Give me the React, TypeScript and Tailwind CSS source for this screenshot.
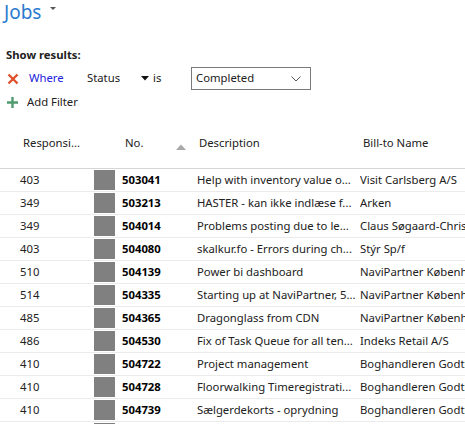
import React from "react";

const rows = [
  ["403", "503041", "Help with inventory value o...", "Visit Carlsberg A/S"],
  ["349", "503213", "HASTER - kan ikke indlæse f...", "Arken"],
  ["349", "504014", "Problems posting due to le...", "Claus Søgaard-Christensen"],
  ["403", "504080", "skalkur.fo - Errors during ch...", "Stýr Sp/f"],
  ["510", "504139", "Power bi dashboard", "NaviPartner København"],
  ["514", "504335", "Starting up at NaviPartner, 5...", "NaviPartner København"],
  ["485", "504365", "Dragonglass from CDN", "NaviPartner København"],
  ["486", "504530", "Fix of Task Queue for all ten...", "Indeks Retail A/S"],
  ["410", "504722", "Project management", "Boghandleren Godthåb"],
  ["410", "504728", "Floorwalking Timeregistrati...", "Boghandleren Godthåb"],
  ["410", "504739", "Sælgerdekorts - oprydning", "Boghandleren Godthåb"],
  ["410", "504740", "Sælgerdekorts", "Boghandleren Godthåb"],
];

export default function App() {
  return (
    <div
      className="w-[465px] h-[424px] overflow-hidden bg-white text-[11.3px] text-[#212121]"
      style={{ fontFamily: '"Segoe UI", "Noto Sans", sans-serif' }}
    >
      <div className="flex items-start h-[26px] pl-[4px]">
        <span className="text-[19px] leading-[24px] text-[#2a7ad0]">Jobs</span>
        <svg width="6" height="4" viewBox="0 0 6 4" className="ml-[9px] mt-[7px]">
          <path d="M0 0 L6 0 L3 3 Z" fill="#555" />
        </svg>
      </div>
      <div className="pl-[6px] pt-[21px] font-bold leading-[16px]">Show results:</div>
      <div className="flex items-center h-[23px] mt-[4px]">
        <div className="w-[29px] flex items-center">
          <svg width="12" height="12" viewBox="0 0 12 12" className="ml-[7px]">
            <path d="M1.5 1.5 L10.5 10.5 M10.5 1.5 L1.5 10.5" stroke="#e0502b" strokeWidth="2.4" />
          </svg>
        </div>
        <span className="w-[58px] text-[#2222dd]">Where</span>
        <span className="w-[54px]">Status</span>
        <div className="w-[12px] flex items-center">
          <svg width="8" height="5" viewBox="0 0 8 5">
            <path d="M0 0 L8 0 L4 4.5 Z" fill="#111" />
          </svg>
        </div>
        <span className="w-[38px]">is</span>
        <div className="w-[120px] h-[23px] border border-[#7a7a7a] flex items-center justify-between pl-[4px] pr-[9px]">
          <span>Completed</span>
          <svg width="10" height="6" viewBox="0 0 10 6">
            <path d="M0.5 0.5 L5 5 L9.5 0.5" stroke="#555" fill="none" strokeWidth="1" />
          </svg>
        </div>
      </div>
      <div className="flex items-center h-[20px] mt-[2px]">
        <svg width="11" height="11" viewBox="0 0 11 11" className="ml-[7px]">
          <path d="M5.5 0 V11 M0 5.5 H11" stroke="#4f9a6f" strokeWidth="2.4" />
        </svg>
        <span className="ml-[9px]">Add Filter</span>
      </div>
      <div className="mt-[10px] h-[47px] border-b border-[#d6d6d6] relative">
        <span className="absolute left-[23px] top-[13px]">Responsi...</span>
        <span className="absolute left-[125px] top-[13px]">No.</span>
        <svg width="10" height="6" viewBox="0 0 10 6" className="absolute left-[176px] top-[22px]">
          <path d="M0 6 L5 0.5 L10 6 Z" fill="#a8a8a8" />
        </svg>
        <span className="absolute left-[199px] top-[13px]">Description</span>
        <span className="absolute left-[363px] top-[13px]">Bill-to Name</span>
      </div>
      {rows.map((r) => (
        <div key={r[1]} className="flex h-[23px] border-b border-[#ebebeb] items-stretch whitespace-nowrap">
          <div className="w-[94px] pl-[20px] flex items-center">{r[0]}</div>
          <div className="w-[21px] bg-[#808080] my-[1px]" />
          <div className="w-[82px] pl-[7px] flex items-center font-bold text-black">{r[1]}</div>
          <div className="w-[163px] flex items-center overflow-hidden">{r[2]}</div>
          <div className="flex-1 flex items-center overflow-hidden">{r[3]}</div>
        </div>
      ))}
    </div>
  );
}
